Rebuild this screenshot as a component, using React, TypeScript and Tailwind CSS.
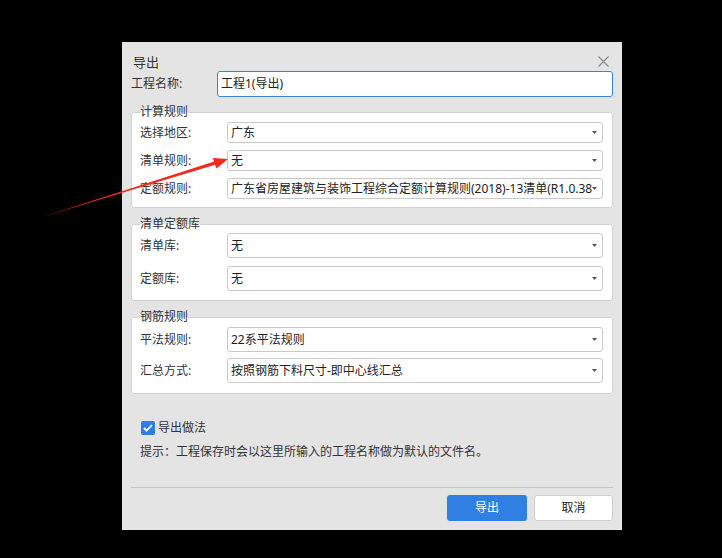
// 导出 dialog — Qt-style export settings with three group boxes and a red annotation arrow.
const FONT = { fontFamily: '"Noto Sans", "Noto Sans CJK SC", sans-serif' };

function Caret() {
  return (
    <svg width="5" height="3" viewBox="0 0 5 3" className="shrink-0" aria-hidden="true">
      <path d="M0 0h5L2.5 3z" fill="#555" />
    </svg>
  );
}

function Select({ value, h }: { value: string; h: string }) {
  return (
    <div
      className={`flex flex-1 min-w-0 items-center rounded-[3px] border border-[#c9c9c9] bg-white pl-[3px] pr-[5px] ${h}`}
    >
      <span className="min-w-0 flex-1 overflow-hidden whitespace-nowrap text-[12px] leading-[16px] text-[#222]">
        {value}
      </span>
      <Caret />
    </div>
  );
}

function Row({ label, value, h }: { label: string; value: string; h: string }) {
  return (
    <div className="flex items-center">
      <span className="w-[87px] shrink-0 text-[12px] leading-[16px] text-[#333]">{label}</span>
      <Select value={value} h={h} />
    </div>
  );
}

function Group({
  title,
  className,
  children,
}: {
  title: string;
  className: string;
  children: React.ReactNode;
}) {
  return (
    <fieldset className={`min-w-0 rounded-[3px] border border-[#d2d2d2] bg-white pl-[8px] pr-[9px] ${className}`}>
      <legend className="text-[12px] leading-[16px] text-[#333]">{title}</legend>
      {children}
    </fieldset>
  );
}

export default function App() {
  return (
    <div className="relative h-[558px] w-[722px] overflow-hidden bg-black pl-[122px] pt-[42px]" style={FONT}>
      <div className="flex h-[488px] w-[500px] flex-col bg-[#e4e4e4] px-[9px]">
        {/* 标题栏 */}
        <div className="flex h-[29px] items-start justify-between pl-[2px] pr-[4px] pt-[12px]">
          <span className="text-[13px] leading-[16px] text-[#333]">导出</span>
          <svg width="11" height="11" viewBox="0 0 11 11" className="mt-[2px]" aria-hidden="true">
            <path d="M0.5 0.5l10 10M10.5 0.5l-10 10" stroke="#8a8a8a" strokeWidth="1.2" />
          </svg>
        </div>

        <div className="flex h-[26px] items-center">
          <span className="w-[86px] shrink-0 text-[12px] leading-[16px] text-[#333]">工程名称:</span>
          <div className="flex h-[26px] flex-1 items-center rounded-[3px] border border-[#3a82dc] bg-white pl-[3px]">
            <span className="text-[12px] leading-[16px] text-[#222]">工程1(导出)</span>
          </div>
        </div>

        <Group title="计算规则" className="mt-[7px] pb-[8px] pt-[2px]">
          <div className="flex flex-col gap-[7px]">
            <Row label="选择地区:" value="广东" h="h-[21px]" />
            <Row label="清单规则:" value="无" h="h-[21px]" />
            <Row
              label="定额规则:"
              value="广东省房屋建筑与装饰工程综合定额计算规则(2018)-13清单(R1.0.38)"
              h="h-[21px]"
            />
          </div>
        </Group>

        <Group title="清单定额库" className="mt-[8px] pb-[9px] pt-[1px]">
          <div className="flex flex-col gap-[8px]">
            <Row label="清单库:" value="无" h="h-[25px]" />
            <Row label="定额库:" value="无" h="h-[25px]" />
          </div>
        </Group>

        <Group title="钢筋规则" className="mt-[8px] pb-[10px] pt-[2px]">
          <div className="flex flex-col gap-[6px]">
            <Row label="平法规则:" value="22系平法规则" h="h-[25px]" />
            <Row label="汇总方式:" value="按照钢筋下料尺寸-即中心线汇总" h="h-[25px]" />
          </div>
        </Group>

        <div className="ml-[10px] mt-[26px] flex h-[16px] items-center gap-[3px]">
          <span className="grid h-[14px] w-[14px] place-items-center rounded-[2px] bg-[#2f7fe0]">
            <svg width="10" height="8" viewBox="0 0 10 8" aria-hidden="true">
              <path d="M1 4l2.6 2.6L9 1" stroke="#fff" strokeWidth="1.8" fill="none" />
            </svg>
          </span>
          <span className="text-[12px] leading-[16px] text-[#333]">导出做法</span>
        </div>

        <p className="ml-[9px] mt-[8px] text-[12px] leading-[16px] text-[#333]">
          提示：工程保存时会以这里所输入的工程名称做为默认的文件名。
        </p>

        <div className="mt-[27px] h-px bg-[#c6c6c6]" />

        <div className="mt-[7px] flex justify-end gap-[7px]">
          <button className="h-[26px] w-[80px] rounded-[3px] bg-[#2f80e2] text-[12px] text-white">导出</button>
          <button className="h-[26px] w-[79px] rounded-[3px] border border-[#cfcfcf] bg-white text-[12px] text-[#222]">
            取消
          </button>
        </div>
      </div>

      {/* 红色标注箭头 */}
      <svg
        className="pointer-events-none absolute left-0 top-0"
        width="722"
        height="558"
        viewBox="0 0 722 558"
        aria-hidden="true"
      >
        <polygon
          points="42,217 214.2,161.6 212.8,157.9 228,159 216.4,168.4 215.1,164.7"
          fill="#f3291c"
        />
      </svg>
    </div>
  );
}
